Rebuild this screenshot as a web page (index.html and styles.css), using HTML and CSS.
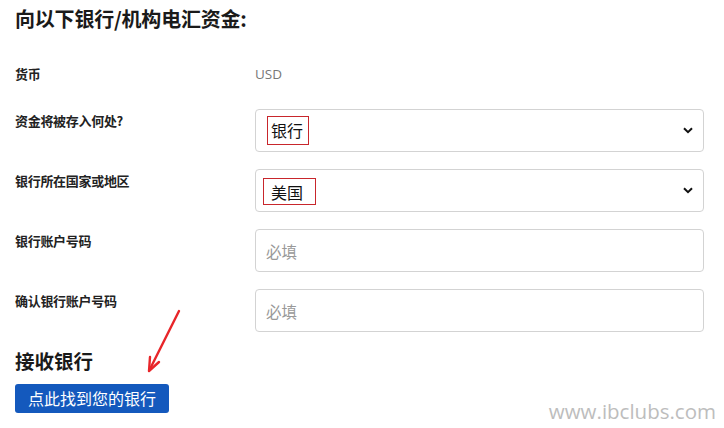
FILE: index.html
```html
<!DOCTYPE html>
<html lang="zh-CN">
<head>
<meta charset="utf-8">
<link rel="stylesheet" href="styles.css">
</head>
<body>
<div class="page">
  <h1 class="title">向以下银行/机构电汇资金:</h1>
  <div class="form">
    <div class="row row-text">
      <div class="label">货币</div>
      <div class="value">USD</div>
    </div>
    <div class="row">
      <div class="label">资金将被存入何处?</div>
      <div class="select"><span class="ann ann-1">银行</span><svg class="chev" viewBox="0 0 10 7" width="10" height="7"><path d="M1 1.2 L5 5.2 L9 1.2" fill="none" stroke="#111" stroke-width="2"/></svg></div>
    </div>
    <div class="row">
      <div class="label">银行所在国家或地区</div>
      <div class="select"><span class="ann ann-2">美国</span><svg class="chev" viewBox="0 0 10 7" width="10" height="7"><path d="M1 1.2 L5 5.2 L9 1.2" fill="none" stroke="#111" stroke-width="2"/></svg></div>
    </div>
    <div class="row">
      <div class="label">银行账户号码</div>
      <div class="input">必填</div>
    </div>
    <div class="row">
      <div class="label">确认银行账户号码</div>
      <div class="input">必填</div>
    </div>
  </div>
  <h2 class="subtitle">接收银行</h2>
  <button class="btn">点此找到您的银行</button>
  <svg class="arrow" width="40" height="70" viewBox="0 0 40 70">
    <path d="M34 6 L5 64" stroke="#e8262a" stroke-width="2.4" fill="none" stroke-linecap="round"/>
    <path d="M4 66 L5 52 M4 66 L14 57" stroke="#e8262a" stroke-width="2.4" fill="none" stroke-linecap="round"/>
  </svg>
  <div class="watermark">www.ibclubs.com</div>
</div>
</body>
</html>
```
FILE: styles.css
```css
* { box-sizing: border-box; }
html, body { margin: 0; padding: 0; background: #fff; }
body {
  width: 724px; height: 428px; overflow: hidden;
  font-family: "Noto Sans CJK SC", "Noto Sans", sans-serif;
  color: #1a1a1a;
}
.page { position: relative; padding: 6px 20px 0 15px; height: 428px; }
.title {
  margin: 0; font-size: 20px; font-weight: 700; line-height: 26px; letter-spacing: -0.2px;
}
.form { display: flex; flex-direction: column; gap: 17px; margin-top: 33px; }
.row { display: grid; grid-template-columns: 240px 449px; align-items: start; }
.row-text { margin-bottom: 9px; }
.label { font-size: 13px; font-weight: 700; line-height: 18px; padding-top: 3px; color: #222; letter-spacing: -0.3px; }
.row-text .label { padding-top: 0; }
.value { font-size: 13.5px; color: #777; line-height: 18px; font-family: "Open Sans", "Noto Sans", sans-serif; }
.select, .input {
  height: 43px; border: 1px solid #d3d3d3; border-radius: 4px;
  display: flex; align-items: center; position: relative;
}
.select { padding: 0 10px 0 10px; justify-content: space-between; font-size: 16px; color: #111; }
.input { padding-left: 10px; font-size: 15.5px; color: #999; }
.ann { border: 1px solid #c8262c; line-height: 26px; display: inline-block; }
.ann-1 { padding: 0 5px 0 3px; margin-left: 1px; height: 29px; }
.ann-2 { padding: 0 12px 0 7px; margin-left: -3px; height: 27px; margin-top: 2px; }
.chev { margin-right: 0; }
.subtitle { margin: 16px 0 0; font-size: 19.5px; font-weight: 700; line-height: 26px; }
.btn {
  margin-top: 10px; height: 29px; width: 154px; border: 0; border-radius: 3px;
  background: #1459bd; color: #fff; font-family: inherit; font-size: 16px; padding: 0; line-height: 29px;
}
.arrow { position: absolute; left: 145px; top: 305px; }
.watermark {
  position: absolute; right: 8px; bottom: 3px;
  font-family: "Open Sans", "Noto Sans", sans-serif; font-size: 20.5px; color: #bdbdbd;
}
```
